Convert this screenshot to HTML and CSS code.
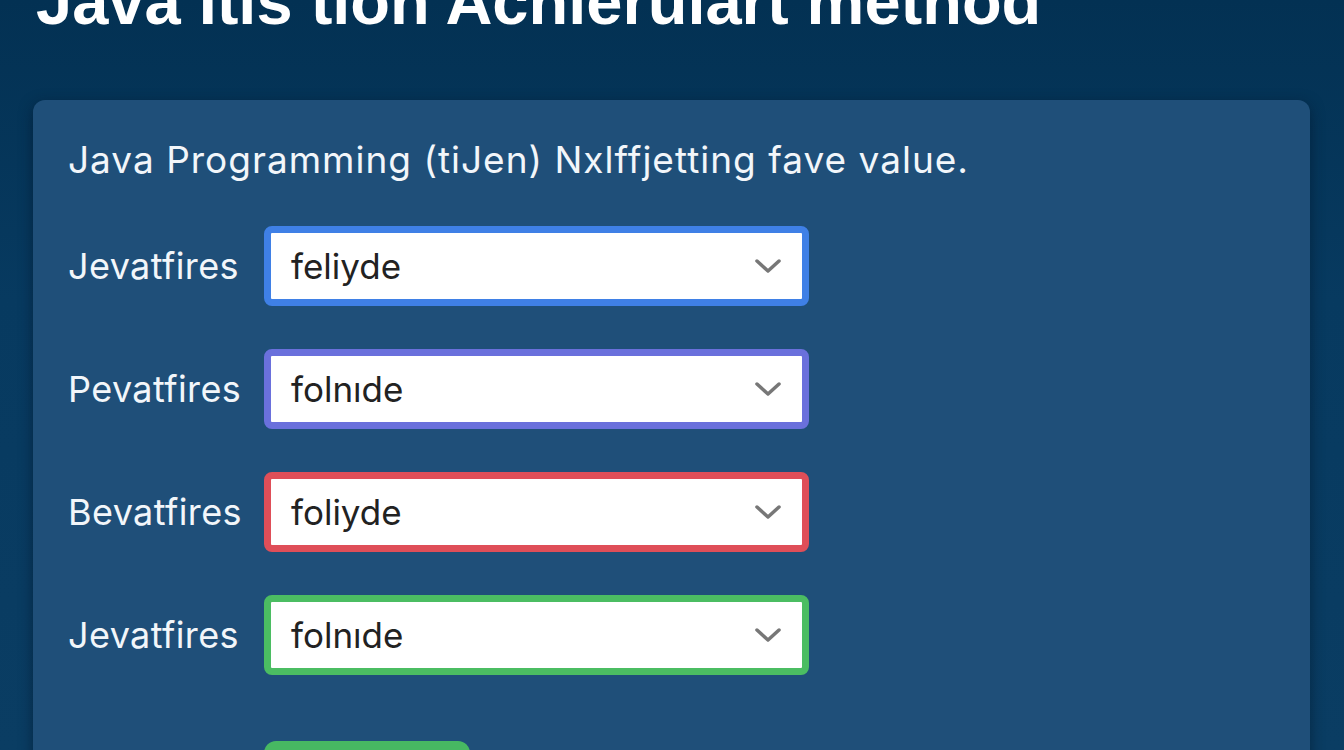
FILE: index.html
```html
<!DOCTYPE html>
<html lang="en">
<head>
<meta charset="utf-8">
<title>Java method</title>
<link rel="stylesheet" href="styles.css">
</head>
<body>
<div class="page">
  <h1 class="title">Java Itls tion Achlerulart method</h1>
  <section class="panel">
    <p class="intro">Java Programming (tiJen) Nxlffjetting fave value.</p>
    <div class="rows">
      <div class="row">
        <span class="label">Jevatfires</span>
        <div class="select select-blue"><span class="value">feliyde</span><svg class="chev" viewBox="0 0 28 16"><polyline points="3,3 14,13 25,3"/></svg></div>
      </div>
      <div class="row">
        <span class="label">Pevatfires</span>
        <div class="select select-purple"><span class="value">folnıde</span><svg class="chev" viewBox="0 0 28 16"><polyline points="3,3 14,13 25,3"/></svg></div>
      </div>
      <div class="row">
        <span class="label">Bevatfires</span>
        <div class="select select-red"><span class="value">foliyde</span><svg class="chev" viewBox="0 0 28 16"><polyline points="3,3 14,13 25,3"/></svg></div>
      </div>
      <div class="row">
        <span class="label">Jevatfires</span>
        <div class="select select-green"><span class="value">folnıde</span><svg class="chev" viewBox="0 0 28 16"><polyline points="3,3 14,13 25,3"/></svg></div>
      </div>
    </div>
    <div class="actions">
      <button class="btn" type="button"></button>
    </div>
  </section>
</div>
</body>
</html>
```
FILE: styles.css
```css
html, body {
  margin: 0;
  padding: 0;
  height: 100%;
  overflow: hidden;
}
body {
  background: linear-gradient(180deg, #033153 0%, #073a60 40%, #0a3d63 100%);
  font-family: "Liberation Sans", Arial, sans-serif;
  color: #ffffff;
}
.page {
  display: flex;
  flex-direction: column;
}
.title {
  margin: -30px 0 0 36px;
  font-size: 65px;
  line-height: 64px;
  font-weight: bold;
  color: #ffffff;
  white-space: nowrap;
}
.panel {
  margin: 66px 34px 0 33px;
  background: #1f4f79;
  border-radius: 12px;
  box-shadow: 0 4px 14px rgba(0, 20, 40, 0.55);
  padding: 36px 35px 40px 35px;
  min-height: 700px;
}
.intro {
  margin: 0;
  font-family: Inter, "Liberation Sans", sans-serif;
  font-size: 37px;
  letter-spacing: 1px;
  line-height: 48px;
  color: #f2f6fa;
}
.rows {
  margin-top: 42px;
  display: flex;
  flex-direction: column;
  gap: 43px;
}
.row {
  display: flex;
  align-items: center;
}
.label {
  width: 196px;
  font-family: Inter, "Liberation Sans", sans-serif;
  font-size: 36px;
  letter-spacing: 0.4px;
  color: #f2f6fa;
}
.select {
  box-sizing: border-box;
  width: 545px;
  height: 80px;
  border: 7px solid;
  border-radius: 8px;
  background: #ffffff;
  display: flex;
  align-items: center;
  justify-content: space-between;
  padding: 0 20px 0 20px;
}
.select-blue { border-color: #3f80e6; }
.select-purple { border-color: #6a70dc; }
.select-red { border-color: #df4e58; }
.select-green { border-color: #4bbd62; }
.value {
  font-family: Inter, "Liberation Sans", sans-serif;
  font-size: 35px;
  color: #222222;
}
.chev {
  width: 28px;
  height: 16px;
  fill: none;
  stroke: #777777;
  stroke-width: 3.5;
  stroke-linecap: round;
  stroke-linejoin: round;
}
.actions {
  margin-top: 66px;
  padding-left: 196px;
}
.btn {
  width: 206px;
  height: 56px;
  border: none;
  border-radius: 12px;
  background: #47b862;
}
```
